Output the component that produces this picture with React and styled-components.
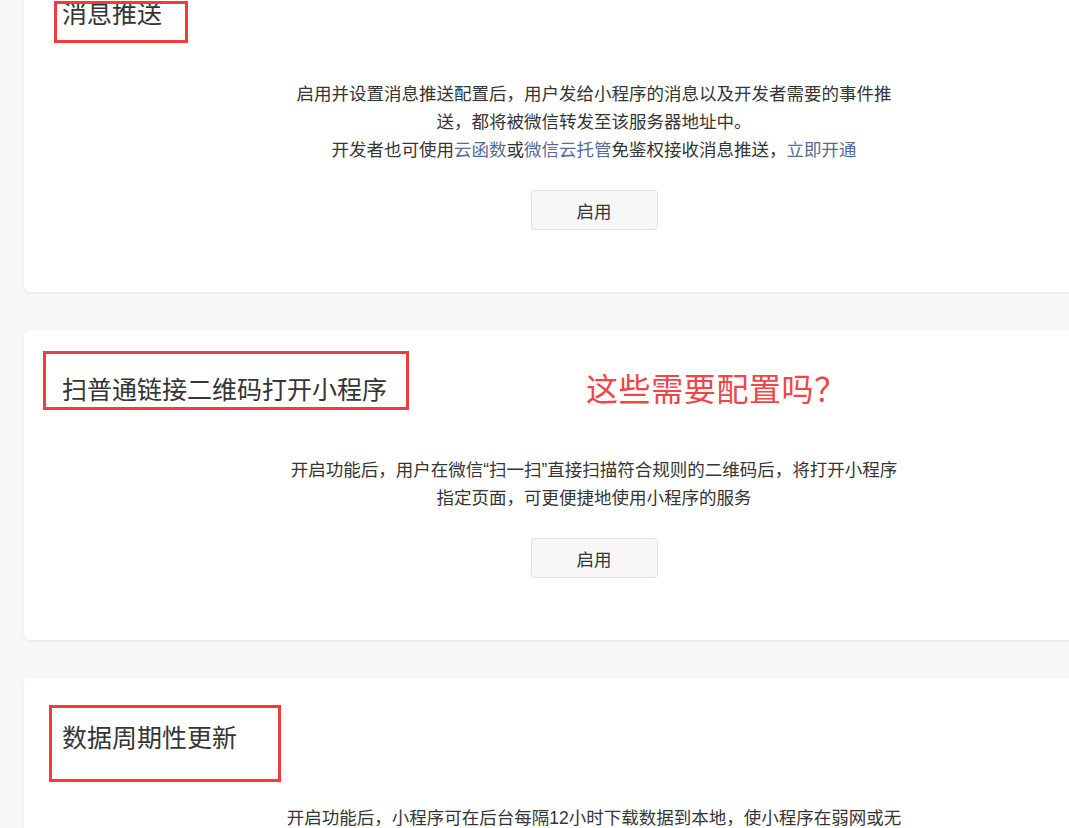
import React from "react";
import styled, { createGlobalStyle } from "styled-components";

const Global = createGlobalStyle`
  html, body {
    margin: 0;
    padding: 0;
    background: #f6f7f9;
    overflow: hidden;
  }
  body {
    font-family: "Liberation Sans", "Noto Sans CJK SC", "Noto Sans", sans-serif;
    color: #353535;
  }
`;

const Page = styled.div`
  position: relative;
  display: flex;
  flex-direction: column;
  gap: 38px;
  padding-left: 24px;
  width: 1045px;
  height: 828px;
  overflow: hidden;
`;

const Card = styled.section`
  flex: none;
  width: 1140px;
  margin-top: ${(p) => p.$offset || 0}px;
  background: #fff;
  border-radius: 6px;
  box-shadow: 0 1px 3px rgba(0, 0, 0, 0.07);
  padding: 42px 38px 62px;
  box-sizing: border-box;
  display: flex;
  flex-direction: column;
`;

const Title = styled.h2`
  margin: 0;
  font-family: "Noto Sans CJK SC", sans-serif;
  font-size: 25px;
  font-weight: 400;
  line-height: 32px;
  color: #353535;
`;

const Body = styled.div`
  margin-top: 52px;
  display: flex;
  flex-direction: column;
  align-items: center;
  gap: 26px;
`;

const Desc = styled.p`
  margin: 0;
  font-size: 17.5px;
  line-height: 28px;
  text-align: center;
  white-space: nowrap;
  color: #353535;
`;

const Link = styled.a`
  color: #576b95;
  text-decoration: none;
`;

const Button = styled.button`
  width: 127px;
  height: 40px;
  border: 1px solid #e2e2e2;
  border-radius: 4px;
  background: #f7f7f7;
  color: #353535;
  font-family: "Noto Sans CJK SC", sans-serif;
  font-size: 17.5px;
  padding: 0;
  cursor: pointer;
`;

const MarkBox = styled.div`
  position: absolute;
  left: ${(p) => p.$x}px;
  top: ${(p) => p.$y}px;
  width: ${(p) => p.$w}px;
  height: ${(p) => p.$h}px;
  border: 3px solid #f23b3b;
  box-sizing: border-box;
  pointer-events: none;
`;

const MarkNote = styled.div`
  position: absolute;
  left: 586px;
  top: 367px;
  font-family: "Noto Sans CJK SC", sans-serif;
  font-size: 32px;
  letter-spacing: 0.6px;
  line-height: 40px;
  color: #f24545;
  white-space: nowrap;
`;

export default function App() {
  return (
    <>
      <Global />
      <Page>
        <Card $offset={-46}>
          <Title>消息推送</Title>
          <Body>
            <Desc>
              启用并设置消息推送配置后，用户发给小程序的消息以及开发者需要的事件推
              <br />
              送，都将被微信转发至该服务器地址中。
              <br />
              开发者也可使用<Link href="#">云函数</Link>或
              <Link href="#">微信云托管</Link>免鉴权接收消息推送，
              <Link href="#">立即开通</Link>
            </Desc>
            <Button>启用</Button>
          </Body>
        </Card>

        <Card>
          <Title>扫普通链接二维码打开小程序</Title>
          <Body>
            <Desc>
              开启功能后，用户在微信“扫一扫”直接扫描符合规则的二维码后，将打开小程序
              <br />
              指定页面，可更便捷地使用小程序的服务
            </Desc>
            <Button>启用</Button>
          </Body>
        </Card>

        <Card>
          <Title>数据周期性更新</Title>
          <Body>
            <Desc>
              开启功能后，小程序可在后台每隔12小时下载数据到本地，使小程序在弱网或无
              <br />
              网络的情况下也能快速打开
            </Desc>
            <Button>启用</Button>
          </Body>
        </Card>

        <MarkBox $x={54} $y={1} $w={134} $h={42} />
        <MarkBox $x={43} $y={351} $w={366} $h={59} />
        <MarkBox $x={49} $y={705} $w={232} $h={77} />
        <MarkNote>这些需要配置吗？</MarkNote>
      </Page>
    </>
  );
}
